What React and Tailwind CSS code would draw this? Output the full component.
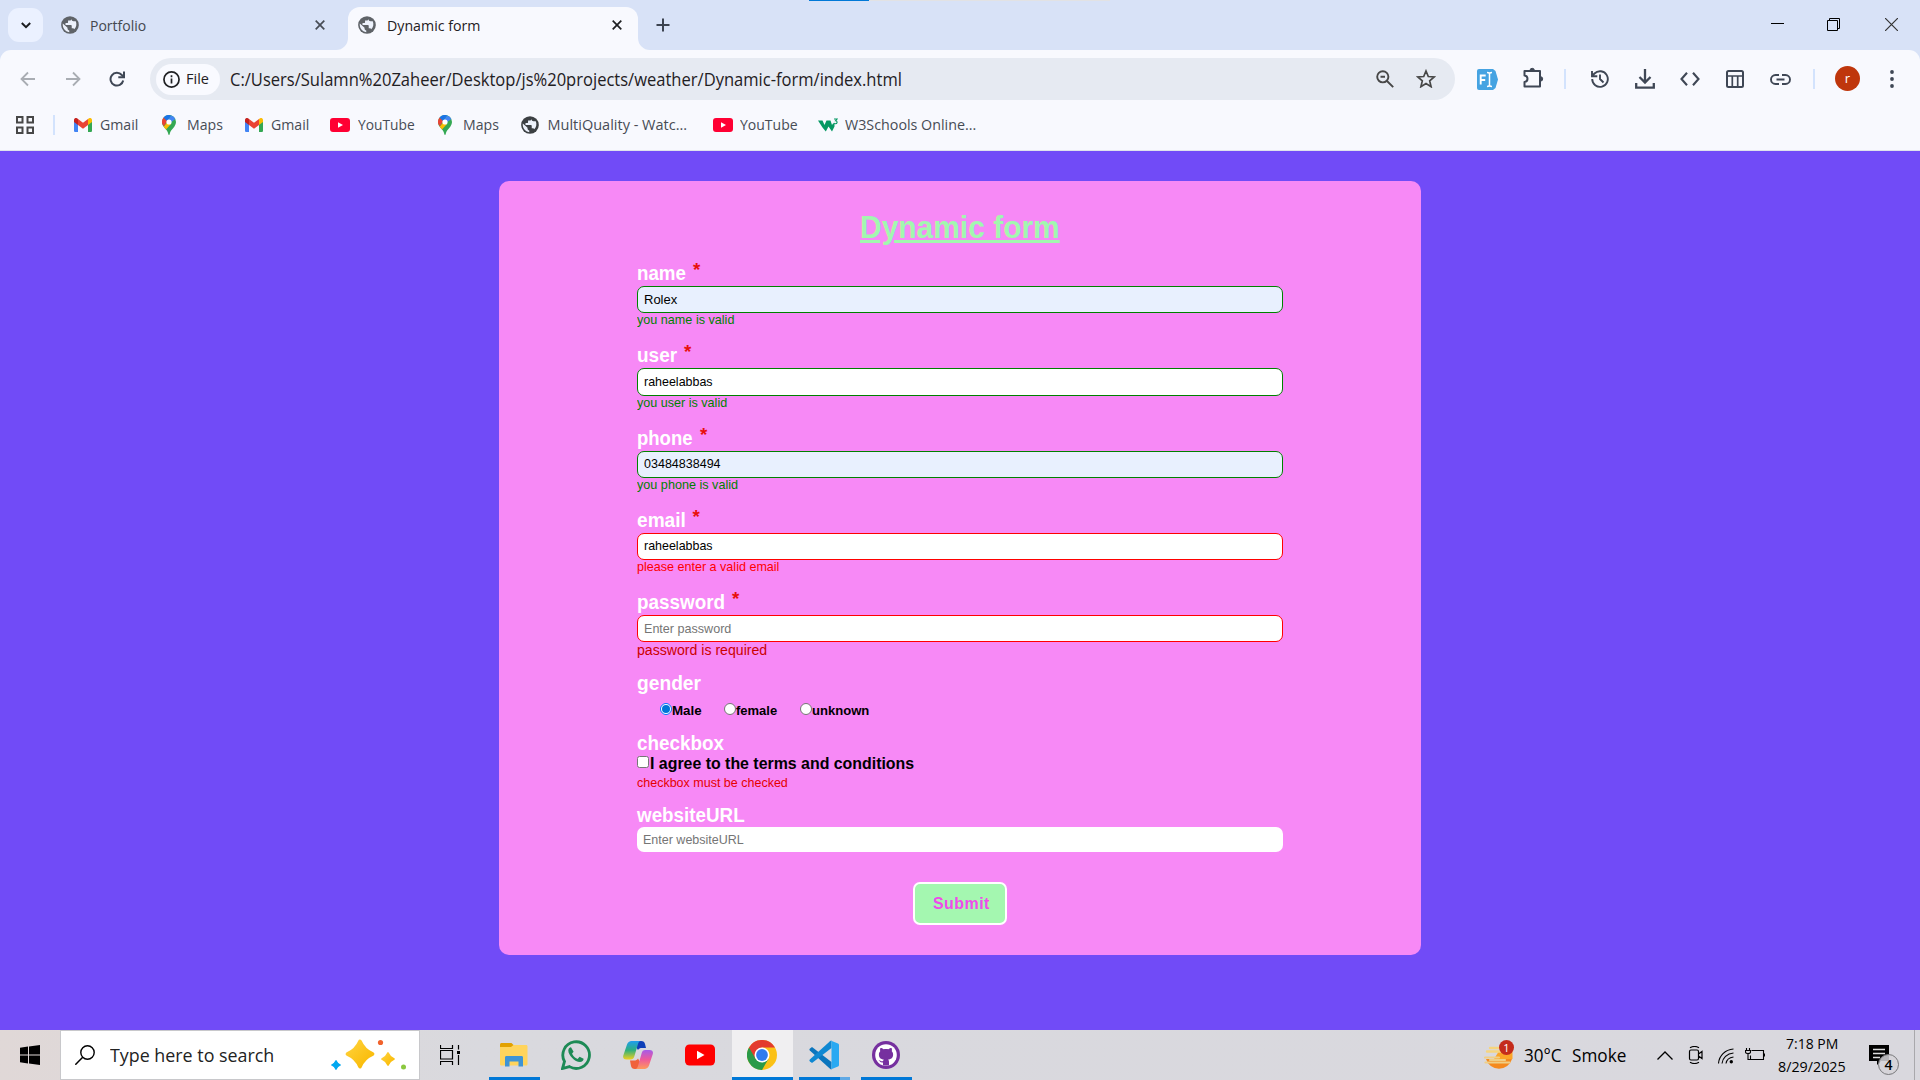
import React, { useLayoutEffect, useRef, useState } from "react";

/* One line of text, squeezed or stretched to the width of its box. */
function Fit({ children, className = "" }) {
  const box = useRef(null);
  const ink = useRef(null);
  const [k, setK] = useState(1);
  useLayoutEffect(() => {
    setK(box.current.clientWidth / ink.current.offsetWidth);
  }, []);
  return (
    <span ref={box} className={"block shrink-0 whitespace-nowrap " + className}>
      <span ref={ink} className="inline-block origin-left" style={{ transform: `scaleX(${k})` }}>
        {children}
      </span>
    </span>
  );
}

function Svg({ className = "", children, box = "0 0 24 24", ...rest }) {
  return (
    <svg viewBox={box} fill="none" className={"block shrink-0 " + className} {...rest}>
      {children}
    </svg>
  );
}

const line = { stroke: "currentColor", strokeWidth: 2 };

function Globe({ className }) {
  return (
    <Svg box="0 0 24 24" className={"size-[18px] " + className}>
      <circle cx="12" cy="12" r="11.8" fill="currentColor" />
      <path
        d="M14 1.800v1.900c0 1.400-1 2.400-2.300 2.400H9.400v2.100c0 .7-.5 1.200-1.200 1.200H6v2.500h7c.7 0 1.300.5 1.300 1.300v3h1.200c1 0 1.900.7 2.200 1.600 2.900-3 3.500-7.200 2-10.800h-2.900c-1.600 0-2.800-1.200-2.800-2.700zM2.400 10.100C1.600 15.800 5.600 21 11 21.700v-2.500c-1.300 0-2.300-1-2.300-2.400v-1.200z"
        fill="#edf2fc"
      />
    </Svg>
  );
}

function Gmail({ className }) {
  return (
    <Svg box="0 0 18 14" className={"h-[14px] w-[18px] " + className}>
      <path d="M0 2v10.700c0 .7.600 1.300 1.300 1.300H4V5z" fill="#4285f4" />
      <path d="M14 5v9h2.700c.7 0 1.300-.6 1.300-1.300V2z" fill="#34a853" />
      <path d="M14 1v6l4-3V2c0-1.800-2-2.700-3.400-1.500z" fill="#fbbc04" />
      <path d="M4 7V1l5 3.800L14 1v6l-5 3.800z" fill="#ea4335" />
      <path d="M0 2v2l4 3V1l-.6-.5C2-.7 0 .2 0 2z" fill="#c5221f" />
    </Svg>
  );
}

function MapPin({ className }) {
  return (
    <Svg box="0 0 14 20" className={"h-[20px] w-[14px] " + className}>
      <path d="M7 0a7 7 0 0 0-7 7c0 2 .7 3.400 1.700 4.700C4 14.600 5.800 16 6.300 19c.1.700.3 1 .7 1s.6-.3.7-1c.5-3 2.300-4.400 4.600-7.300A7.500 7.500 0 0 0 14 7a7 7 0 0 0-7-7z" fill="#34a853" />
      <path d="M1.700 11.700 5 7.500 9 9 4 14.500z" fill="#fbbc04" />
      <path d="M1.600 2.500 5.500 6 1.700 11.200A7 7 0 0 1 1.600 2.500z" fill="#ea4335" />
      <path d="M1.600 2.500A7 7 0 0 1 9.200.4L5 6z" fill="#1a73e8" />
      <path d="M9.200.4A7 7 0 0 1 13.300 4L8 8 5 6z" fill="#4285f4" />
      <circle cx="7" cy="7" r="2.600" fill="#fff" />
    </Svg>
  );
}

function YouTube({ className, color = "#ff0033" }) {
  return (
    <Svg box="0 0 20 14" className={className}>
      <rect width="20" height="14" rx="3" fill={color} />
      <path d="M8 4.200v5.600L13 7z" fill="#fff" />
    </Svg>
  );
}

function Close({ className }) {
  return (
    <Svg box="0 0 10 10" className={"size-[10px] " + className}>
      <path d="M.7.700l8.600 8.600M9.300.700.7 9.300" stroke="currentColor" strokeWidth="1.700" />
    </Svg>
  );
}

function TabStrip() {
  return (
    <div className="relative flex h-[50px] items-start bg-[#d8e2f7]">
      <div className="absolute left-[809px] top-0 flex h-px w-[301px] bg-[#e2e2e4]">
        <div className="h-px w-[60px] bg-[#0078d7]" />
      </div>
      <div className="ml-[8px] mt-[8px] flex h-[34px] w-[35px] items-center justify-center rounded-[11px] bg-[#ebf1ff]">
        <Svg box="0 0 10 7" className="h-[7px] w-[10px] text-[#1b1c1f]">
          <path d="M.8 1 5 5.200 9.200 1" {...line} />
        </Svg>
      </div>
      <div className="ml-[18px] flex h-[50px] w-[275px] items-center">
        <Globe className="text-[#5f6368]" />
        <Fit className="ml-[11px] mt-px w-[56px] text-[14.5px] text-[#44484f]">Portfolio</Fit>
        <Close className="ml-[169px] text-[#474c55]" />
      </div>
      <div className="flex h-[50px] items-end">
        <Svg box="0 0 12 12" className="size-[12px]">
          <path d="M12 0v12H0A12 12 0 0 0 12 0z" fill="#f8f9fe" />
        </Svg>
        <div className="flex h-[43px] w-[290px] items-center rounded-t-[12px] bg-[#f8f9fe] pb-[7px] pl-[10px]">
          <Globe className="text-[#5f6368]" />
          <Fit className="ml-[11px] mt-px w-[92.500px] text-[14.5px] text-[#1f2023]">Dynamic form</Fit>
          <Close className="ml-[132.500px] text-[#1f2023]" />
        </div>
        <Svg box="0 0 12 12" className="size-[12px]">
          <path d="M0 0v12h12A12 12 0 0 1 0 0z" fill="#f8f9fe" />
        </Svg>
      </div>
      <Svg box="0 0 14 14" className="ml-[6px] mt-[18px] size-[14px] text-[#3c4350]">
        <path d="M7 .5v13M.5 7h13" {...line} />
      </Svg>
      <div className="ml-auto mr-[22px] mt-[18px] flex text-black">
        <Svg box="0 0 13 13" className="size-[13px]">
          <path d="M0 5.500h13" stroke="currentColor" />
        </Svg>
        <Svg box="0 0 13 13" className="ml-[43px] size-[13px]">
          <path d="M.5 2.500h10v10H.5zM2.500 2.500v-2h10v10h-2" stroke="currentColor" />
        </Svg>
        <Svg box="0 0 13 13" className="ml-[45px] size-[13px] text-[#333]">
          <path d="M0 0l13 13M13 0 0 13" stroke="currentColor" strokeWidth="1.200" />
        </Svg>
      </div>
    </div>
  );
}

function Toolbar() {
  return (
    <div className="bg-[#d8e2f7]">
      <div className="flex h-[58px] items-center rounded-t-[11px] bg-[#f8f9fe] text-[#3f4755]">
        <Svg box="0 0 16 16" className="ml-[20px] size-[16px] text-[#a9adb3]">
          <path d="M15 8H2M8 1.500 1.500 8 8 14.500" stroke="currentColor" strokeWidth="1.800" />
        </Svg>
        <Svg box="0 0 16 16" className="ml-[29px] size-[16px] text-[#a9adb3]">
          <path d="M1 8h13M8 1.500 14.500 8 8 14.500" stroke="currentColor" strokeWidth="1.800" />
        </Svg>
        <Svg box="0 0 16 16" className="ml-[28px] mt-[-1px] size-[16px]">
          <path d="M14.200 9.500A6.400 6.400 0 1 1 12.800 4L14.500 5.500" {...line} />
          <path d="M15 .5v5.700H9.300" {...line} />
        </Svg>
        <div className="ml-[25px] flex h-[42px] w-[1305px] items-center rounded-full bg-[#e6eaf2]">
          <div className="ml-[6px] flex h-[31px] w-[64px] items-center rounded-full bg-[#f9faff] text-[#1f2023]">
            <Svg box="0 0 18 18" className="ml-[7px] size-[17px]">
              <circle cx="9" cy="9" r="8" stroke="currentColor" strokeWidth="1.800" />
              <path d="M9 8v5.200M9 4.500v2" stroke="currentColor" strokeWidth="1.800" />
            </Svg>
            <Fit className="ml-[6px] w-[23px] text-[14.500px] font-medium">File</Fit>
          </div>
          <Fit className="ml-[10px] w-[672px] text-[17.500px] text-[#1f2023]">
            C:/Users/Sulamn%20Zaheer/Desktop/js%20projects/weather/Dynamic-form/index.html
          </Fit>
          <Svg box="0 0 18 18" className="ml-[474px] size-[18px] text-[#474747]">
            <circle cx="6.800" cy="6.800" r="5.600" stroke="currentColor" strokeWidth="1.900" />
            <path d="m11 11 6.200 6.200M4.500 6.800H9" stroke="currentColor" strokeWidth="1.900" />
          </Svg>
          <Svg box="0 0 20 19" className="ml-[21.500px] mt-[-1px] h-[19px] w-[20px] text-[#474747]">
            <path d="m10 2 2.300 5.500 5.900.5-4.500 3.900 1.400 5.800-5.100-3.100-5.100 3.100 1.400-5.800L1.800 8l5.900-.5z" stroke="currentColor" strokeWidth="1.700" />
          </Svg>
        </div>
        <Svg box="0 0 21 21" className="ml-[22px] size-[21px]">
          <path d="M2 0h14l2.500 2L21 10.500l-2.500 8.500-2.500 2H2a2 2 0 0 1-2-2V2a2 2 0 0 1 2-2z" fill="#45a3e2" />
          <path d="M3.700 15.500V6.500h5M3.700 11h4.500" stroke="#fff" strokeWidth="1.900" />
          <path d="M10 3.500c1.500 0 2.500.4 2.500 1.500v11c0 1-1 1.500-2.500 1.500M15 3.500c-1.500 0-2.500.4-2.500 1.500v11c0 1 1 1.500 2.500 1.500" stroke="#fff" strokeWidth="1.500" />
        </Svg>
        <Svg box="0 0 21 21" className="ml-[25px] mt-[-3px] size-[21px]">
          <path d="M1.500 4h15.500v15.500H1.500V15c4-.6 4-6 0-6.600z" {...line} strokeLinejoin="round" />
          <path d="M7 3.500a2.200 2.200 0 0 1 4.400 0zM17.500 9.700a2.200 2.200 0 0 1 0 4.400z" fill="currentColor" stroke="currentColor" />
        </Svg>
        <div className="ml-[20px] h-[20px] w-[2px] bg-[#d3e3fd]" />
        <Svg box="0 0 18 18" className="ml-[25px] size-[18px]">
          <path d="M1.200 9A7.800 7.800 0 1 0 3.500 3.500L1 6M1 1v5.300h5.300M9 4.500V9l3.500 3.500" stroke="currentColor" strokeWidth="1.900" />
        </Svg>
        <Svg box="0 0 20 20" className="ml-[26px] size-[20px]">
          <path d="M10 0v13M4.500 8l5.500 5.500L15.500 8M1.200 14v4.700h17.600V14" stroke="currentColor" strokeWidth="2.300" />
        </Svg>
        <Svg box="0 0 20 14" className="ml-[25px] h-[14px] w-[20px]">
          <path d="M7 .8 1.500 7 7 13.200M13 .8 18.500 7 13 13.200" stroke="currentColor" strokeWidth="2.100" />
        </Svg>
        <Svg box="0 0 18 18" className="ml-[26px] size-[18px]">
          <rect x="1" y="1" width="16" height="16" rx="1.500" {...line} />
          <path d="M1 6h16M6.300 6v11M11.700 6v11" stroke="currentColor" strokeWidth="1.700" />
        </Svg>
        <Svg box="0 0 21 11" className="ml-[26px] h-[11px] w-[21px]">
          <path d="M9 1H5.500a4.500 4.500 0 0 0 0 9H9M12 1h3.500a4.500 4.500 0 0 1 0 9H12M6.500 5.500h8" stroke="currentColor" strokeWidth="1.900" />
        </Svg>
        <div className="ml-[22px] h-[20px] w-[2px] bg-[#d3e3fd]" />
        <div className="ml-[20px] mt-[-1px] flex size-[25px] items-center justify-center rounded-full bg-[#bf360c] text-[13px] leading-none text-white">r</div>
        <Svg box="0 0 4 18" className="ml-[30px] mt-[-1px] h-[18px] w-[4px]">
          <circle cx="2" cy="2" r="1.900" fill="currentColor" />
          <circle cx="2" cy="9" r="1.900" fill="currentColor" />
          <circle cx="2" cy="16" r="1.900" fill="currentColor" />
        </Svg>
      </div>
    </div>
  );
}

function Bookmarks() {
  return (
    <div className="flex h-[43px] items-center border-b border-[#dfe2ec] bg-[#f8f9fe] pb-[8px] text-[14.500px] text-[#474c55]">
      <Svg box="0 0 18 18" className="ml-[15.500px] size-[18px] text-[#474747]">
        <path d="M1 1h5.500v5.500H1zM11.500 1H17v5.500h-5.500zM1 11.500h5.500V17H1zM11.500 11.500H17V17h-5.500z" stroke="currentColor" strokeWidth="2" />
      </Svg>
      <div className="ml-[19.500px] h-[20px] w-[2px] bg-[#d3e3fd]" />
      <Gmail className="ml-[19px]" />
      <Fit className="ml-[8px] w-[38px]">Gmail</Fit>
      <MapPin className="ml-[24px]" />
      <Fit className="ml-[11px] w-[36px]">Maps</Fit>
      <Gmail className="ml-[22px]" />
      <Fit className="ml-[8px] w-[38px]">Gmail</Fit>
      <YouTube className="ml-[21px] h-[14px] w-[20px]" />
      <Fit className="ml-[8px] w-[57px]">YouTube</Fit>
      <MapPin className="ml-[23px]" />
      <Fit className="ml-[11px] w-[36px]">Maps</Fit>
      <Globe className="ml-[22px] text-[#3c4043]" />
      <Fit className="ml-[8.500px] w-[140px]">MultiQuality - Watc...</Fit>
      <YouTube className="ml-[25.500px] h-[14px] w-[20px]" />
      <Fit className="ml-[7px] w-[57.500px]">YouTube</Fit>
      <Svg box="0 0 20 14" className="ml-[20.500px] h-[14px] w-[20px]">
        <path d="M0 2.500h4.500l2 4.500L8.500 2.500h4L14 7l1-1.500h1.500v3L14 13.500l-3.500-5-2.700 5-3.300-4z" fill="#059862" />
        <path d="M16 1h3l-1.500 1.800c2.300.2 2 3-.2 3-.8 0-1.300-.4-1.500-1" stroke="#059862" strokeWidth="1.100" />
      </Svg>
      <Fit className="ml-[7px] w-[131px]">W3Schools Online...</Fit>
    </div>
  );
}

function Label({ children, required, width }) {
  return (
    <div className="flex h-[22px] text-[19.500px] font-bold leading-[21px] text-white">
      <Fit className={width}>{children}</Fit>
      {required && <span className="ml-[7px] mt-[-4px] text-[18.750px] font-bold text-[#e8100c]">*</span>}
    </div>
  );
}

const fields = [
  { label: "name", lw: "w-[49px]", value: "Rolex", vw: "w-[32.500px]", input: "h-[27px] border-[#008000] bg-[#e8f0fe]", note: "you name is valid", nw: "w-[97px]", tone: "text-[#008000]" },
  { label: "user", lw: "w-[40px]", value: "raheelabbas", vw: "w-[69px]", input: "h-[28px] border-[#008000] bg-white", note: "you user is valid", nw: "w-[90px]", tone: "text-[#008000]" },
  { label: "phone", lw: "w-[56px]", value: "03484838494", vw: "w-[77px]", input: "h-[27px] border-[#008000] bg-[#e8f0fe]", note: "you phone is valid", nw: "w-[100.500px]", tone: "text-[#008000]" },
  { label: "email", lw: "w-[48.500px]", value: "raheelabbas", vw: "w-[69px]", input: "h-[27px] border-[#ff0000] bg-white", note: "please enter a valid email", nw: "w-[142px]", tone: "text-[#ff0000]" },
];

function Field({ f }) {
  return (
    <div className="h-[82.300px]">
      <Label required width={f.lw}>{f.label}</Label>
      <div className={"mt-[1px] flex items-center rounded-[7px] border pl-[6px] text-[13px] leading-[14px] text-black " + f.input}>
        <Fit className={f.vw}>{f.value}</Fit>
      </div>
      <Fit className={"text-[13px] leading-[14px] " + f.nw + " " + f.tone}>{f.note}</Fit>
    </div>
  );
}

function Radio({ on, className = "", label, width }) {
  return (
    <div className={"flex items-start " + className}>
      <div className={"flex size-[12px] items-center justify-center rounded-full border bg-white " + (on ? "border-[#0075ff]" : "border-[#767676]")}>
        {on && <div className="size-[8px] rounded-full bg-[#0075d7]" />}
      </div>
      <Fit className={"mt-px text-[13.300px] font-bold leading-[14px] text-black " + width}>{label}</Fit>
    </div>
  );
}

function Form() {
  return (
    <div className="flex h-[879px] justify-center bg-[#714bf7] pt-[30px] font-['Liberation_Sans',Arial,sans-serif]">
      <div className="h-[774px] w-[922px] rounded-[10px] bg-[#f789f6] px-[138px] pt-[29px]">
        <h1 className="flex h-[53px] justify-center text-[31px] font-bold leading-[35px] text-[#a2f7af]">
          <Fit className="w-[200px]">
            <span className="underline">Dynamic form</span>
          </Fit>
        </h1>
        {fields.map((f) => (
          <Field key={f.label} f={f} />
        ))}
        <Label required width="w-[88px]">password</Label>
        <div className="mt-px flex h-[27px] items-center rounded-[7px] border border-[#ff0000] bg-white pl-[6px] text-[13px] leading-[14px] text-[#757575]">
          <Fit className="w-[87px]">Enter password</Fit>
        </div>
        <Fit className="w-[129.500px] text-[14px] leading-[17px] text-[#cc0000]">password is required</Fit>
        <div className="mt-[14px]">
          <Label width="w-[63.500px]">gender</Label>
        </div>
        <div className="mt-[8px] flex h-[30px] pl-[22.500px]">
          <Radio on label="Male" width="ml-[0.500px] w-[29.500px]" />
          <Radio className="ml-[22.500px]" label="female" width="ml-0 w-[41px]" />
          <Radio className="ml-[22.500px]" label="unknown" width="ml-[0.500px] w-[57px]" />
        </div>
        <Label width="w-[86.500px]">checkbox</Label>
        <div className="flex h-[21px] items-start">
          <div className="mt-[1px] size-[12px] rounded-[2.500px] border border-[#767676] bg-white" />
          <Fit className="ml-[0.500px] mt-[-1px] w-[264px] text-[16.500px] font-bold leading-[18px] text-black">I agree to the terms and conditions</Fit>
        </div>
        <Fit className="w-[151px] text-[13px] leading-[14px] text-[#e60000]">checkbox must be checked</Fit>
        <div className="mt-[15px]">
          <Label width="w-[107.500px]">websiteURL</Label>
        </div>
        <div className="flex h-[25px] items-center rounded-[7px] bg-white pl-[6px] text-[13px] leading-[14px] text-[#757575]">
          <Fit className="w-[101px]">Enter websiteURL</Fit>
        </div>
        <div className="mt-[30px] flex justify-center">
          <div className="flex h-[43px] w-[94px] items-center justify-center rounded-[7px] border-2 border-white bg-[#a4f7b0] pb-[2px] pl-[2px] text-[16.500px] font-bold leading-[18px] text-[#ee4bea]">
            <Fit className="w-[57px] tracking-[0.500px]">Submit</Fit>
          </div>
        </div>
      </div>
    </div>
  );
}

function Running({ className, children, underline = "bg-[#0078d7]" }) {
  return (
    <div className={"flex h-[50px] shrink-0 flex-col items-center " + className}>
      <div className="flex h-[47px] w-full items-center justify-center pt-[3px]">{children}</div>
      <div className={"h-[3px] w-full " + underline} />
    </div>
  );
}

function Star({ x, y, r, fill }) {
  const q = r * 0.3;
  return (
    <path
      d={`M${x} ${y - r}Q${x + q} ${y - q} ${x + r} ${y}Q${x + q} ${y + q} ${x} ${y + r}Q${x - q} ${y + q} ${x - r} ${y}Q${x - q} ${y - q} ${x} ${y - r}z`}
      fill={fill}
      stroke={fill}
      strokeWidth={r * 0.3}
      strokeLinejoin="round"
    />
  );
}

function Taskbar() {
  return (
    <div className="flex h-[50px] items-center bg-gradient-to-r from-[#e0d8d7] via-[#d9d9de] via-25% to-[#d9d8de] text-black">
      <Svg box="0 0 20 20" className="ml-[20px] size-[20px]">
        <path d="M0 2.700 8 1.600v7.900H0zM9 1.500 20 0v9.500H9zM0 10.500h8v7.900l-8-1.100zM9 10.500h11V20L9 18.500z" fill="#000" />
      </Svg>
      <div className="ml-[20px] flex h-[50px] w-[360px] items-center border border-[#c8c8cb] bg-white">
        <Svg box="0 0 20 20" className="ml-[14px] size-[20px]">
          <circle cx="12.500" cy="7.500" r="6.700" stroke="#000" strokeWidth="1.400" />
          <path d="m7.700 12.300-7.400 7.400" stroke="#000" strokeWidth="1.500" />
        </Svg>
        <Fit className="ml-[15px] w-[164px] text-[18.500px] text-[#222]">Type here to search</Fit>
        <Svg box="0 0 76 32" className="ml-[56px] h-[32px] w-[76px]">
          <defs>
            <linearGradient id="gold" x1="0" y1="0" x2="1" y2="1">
              <stop offset="0" stopColor="#ffd23c" />
              <stop offset="1" stopColor="#f9b800" />
            </linearGradient>
          </defs>
          <Star x={30} y={15} r={12.500} fill="url(#gold)" />
          <Star x={58} y={20} r={6} fill="url(#gold)" />
          <Star x={6} y={26} r={4.300} fill="#00a8f0" />
          <circle cx="50.500" cy="3.500" r="2.600" fill="#f1622c" />
          <circle cx="73.500" cy="28" r="2.500" fill="#8bc83f" />
        </Svg>
      </div>
      <Svg box="0 0 20 20" className="ml-[20px] size-[20px]">
        <path d="M.5 0v3.500h12V0M.5 20v-3.500h12V20M.5 5.500h12v8.500H.5zM18.500 0v4.500M18.500 10v10" stroke="#000" strokeWidth="1.200" />
        <path d="M17 6h3v3h-3z" fill="#000" />
      </Svg>
      <Running className="ml-[29px] w-[51px]">
        <Svg box="0 0 28 24" className="mr-px h-[24px] w-[28px]">
          <path d="M0 1.500C0 .7.700 0 1.500 0h10L14 2.500 11 8H0z" fill="#e2a100" />
          <path d="M0 4h11l2.500-2H26c1 0 1.500.6 1.500 1.500V21c0 1-.7 1.500-1.500 1.500H1.500C.6 22.500 0 22 0 21z" fill="#ffd45c" />
          <path d="M5 23.500v-9c0-1 .6-1.500 1.500-1.500h15c.9 0 1.500.5 1.500 1.500v9h-4.500v-5h-9v5z" fill="#3f94d5" />
        </Svg>
      </Running>
      <Svg box="0 0 30 30" className="ml-[21px] size-[30px]">
        <path d="M1.500 28.500 3.500 21.500A13.300 13.300 0 1 1 8.500 26.600z" stroke="#1d8a55" strokeWidth="2.800" />
        <path d="M10 7.300c-.6-.2-2.700.7-2.700 3.200 0 4.800 6.700 11.600 11.700 11.600 2 0 3.800-1.600 3.600-3.400l-4-2-2 2.200c-2.200-.6-5-3.400-5.500-5.400l1.500-1.700z" fill="#1d8a55" />
      </Svg>
      <Svg box="0 0 30 28" className="ml-[32px] h-[28px] w-[30px]">
        <defs>
          <linearGradient id="cpA" x1="0" y1="0" x2="0" y2="1">
            <stop offset="0" stopColor="#1e9df0" />
            <stop offset=".5" stopColor="#2eb07c" />
            <stop offset="1" stopColor="#f0d020" />
          </linearGradient>
          <linearGradient id="cpB" x1="0" y1="0" x2="0" y2="1">
            <stop offset="0" stopColor="#a55bea" />
            <stop offset=".5" stopColor="#ee5a9a" />
            <stop offset="1" stopColor="#ff9a5a" />
          </linearGradient>
        </defs>
        <path d="M9 0h9c2.500 0 3.500 1 4 3l1 4h-4c-2 0-3 .5-4 2z" fill="#0d3fb8" />
        <path d="M21 28h-9c-2.500 0-3.500-1-4-3l-1-5.500h4c2 0 3-.5 4-2z" fill="#f0623c" />
        <path d="M8.500 0H18c-2 0-2.500 1.500-3 3L11.300 15.500c-.6 1.900-1.600 3-3.600 3H3.500C.5 18.500-.3 16.500.3 14.500L4 3.500C4.800 1.200 6.500 0 8.500 0z" fill="url(#cpA)" />
        <path d="M21.500 28H12c2 0 2.500-1.500 3-3l3.700-13c.6-1.900 1.600-3 3.600-3h4.200c3 0 3.900 2 3.300 4L26 24.500c-.8 2.300-2.500 3.500-4.500 3.500z" fill="url(#cpB)" />
      </Svg>
      <YouTube className="ml-[32px] h-[22px] w-[30px]" color="#ff0000" />
      <Running className="ml-[17px] w-[61px] bg-[#f0eff1]">
        <svg viewBox="0 0 30 30" className="mr-px size-[30px]">
          <circle cx="15" cy="15" r="15" fill="#fbc116" />
          <path d="M15 15 2 7.500A15 15 0 0 0 15 30l6.500-11.300z" fill="#2a9a48" />
          <path d="M2 7.500A15 15 0 0 1 28 7.500H15L8.500 18.700z" fill="#e33b2e" />
          <circle cx="15" cy="15" r="7.500" fill="#fff" />
          <circle cx="15" cy="15" r="5.900" fill="#2f7bee" />
        </svg>
      </Running>
      <Running className="ml-[6px] w-[51px]" underline="bg-gradient-to-r from-[#0078d7] from-80% to-[#60a9e5] to-80%">
        <svg viewBox="0 0 30 30" className="mr-[2px] size-[30px]">
          <path d="M1 8.500 3 7 22.500 22v7.500c-.6 0-1-.3-1.500-.7L.8 10.600c-.6-.6-.5-1.500.2-2.100z" fill="#0b75bd" />
          <path d="M1 21.500 3 23 22.500 8V.500c-.6 0-1 .3-1.500.7L.8 19.400c-.6.600-.5 1.500.2 2.100z" fill="#0f88d2" />
          <path d="M21.500.500 29 3.500c.6.300 1 .8 1 1.500v20c0 .7-.4 1.200-1 1.500l-7.500 3c.7-.2 1-.8 1-1.500V2c0-.7-.3-1.200-1-1.500z" fill="#29a9f2" />
        </svg>
      </Running>
      <Running className="ml-[11px] w-[51px]">
        <svg viewBox="0 0 28 28" className="mr-[2px] size-[28px]">
          <circle cx="14" cy="14" r="14" fill="#76309f" />
          <circle cx="14" cy="14" r="10.800" fill="#fff" />
          <path d="M11 24.500v-3c-3 .4-3.200-1.500-4.500-2.200 2-.4 2.300 1.600 4.600.8.100-.8.500-1.200.8-1.500-3-.4-5-1.700-5-5.100 0-1.300.4-2.300 1.300-3.200-.3-1-.2-2.200.2-3.300 1.200 0 2.200.5 3.300 1.300 1.600-.4 3-.4 4.600 0 1.100-.8 2.100-1.300 3.300-1.300.4 1.100.5 2.300.2 3.300.9.900 1.300 1.900 1.300 3.200 0 3.400-2 4.700-5 5.100.6.500.9 1.200.9 2.200v3.700z" fill="#76309f" />
        </svg>
      </Running>
      <div className="ml-auto flex h-[50px] items-center">
        <div className="relative h-[30px] w-[30px]">
          <Svg box="0 0 30 30" className="size-[30px]">
            <path d="M2 19h26a13.500 13.500 0 0 1-26 0z" fill="#f58a1f" />
            <path d="M15 11h13.500v8H10z" fill="#fba428" />
            <path d="M6 8h9M3 11.500h15" stroke="#f6d57e" strokeWidth="2.400" strokeLinecap="round" />
            <path d="M1 17.500h14M1.500 22.500h24M6 20h15" stroke="#f0cf86" strokeWidth="2.200" strokeLinecap="round" />
          </Svg>
          <div className="absolute left-[15px] top-0 flex size-[15px] items-center justify-center rounded-full bg-[#c42b1c] text-[11px] leading-none text-white">1</div>
        </div>
        <Fit className="ml-[10px] w-[38px] text-[17.500px]">30°C</Fit>
        <Fit className="ml-[10px] w-[54px] text-[17.500px]">Smoke</Fit>
        <Svg box="0 0 16 9" className="ml-[31px] h-[9px] w-[16px]">
          <path d="M.5 8.500 8 1l7.500 7.500" stroke="#000" strokeWidth="1.300" />
        </Svg>
        <Svg box="0 0 16 18" className="ml-[15px] h-[18px] w-[16px]">
          <path d="M3 4h6c1 0 1.500.5 1.500 1.500v7c0 1-.5 1.500-1.500 1.500H3c-1 0-1.500-.5-1.500-1.500v-7C1.500 4.500 2 4 3 4zM10.500 8l3.500-2.500v7L10.500 10M2 1.800C4.500.3 8.500.3 11 1.800M2 16.200c2.500 1.500 6.500 1.500 9 0" stroke="#000" strokeWidth="1.200" />
        </Svg>
        <Svg box="0 0 16 16" className="ml-[14px] mt-[2px] size-[16px]">
          <path d="M.5 15.500C1 8 7 1.500 15.500 1M4 15.500C4.500 10 9 5.500 15.500 5M8 15.500C8.500 12 11 9.500 15.500 9" stroke="#000" strokeWidth="1.100" />
          <circle cx="13.300" cy="13.800" r="1.700" fill="#000" />
        </Svg>
        <Svg box="0 0 20 14" className="ml-[11px] h-[14px] w-[20px]">
          <path d="M6.500 2.500h12v9h-13V7.500M19.500 5.500v3M1.500 0v2M4.500 0v2M.5 2.500h5v1.500c0 2-5 2-5 0zM3 6v5.500h2.500" stroke="#000" strokeWidth="1.100" />
        </Svg>
        <div className="ml-[13px] flex w-[68px] flex-col items-center text-[14.500px] leading-[23px]">
          <Fit className="w-[52px]">7:18 PM</Fit>
          <Fit className="w-[68px]">8/29/2025</Fit>
        </div>
        <div className="relative ml-[23px] h-[20px] w-[20px]">
          <Svg box="0 0 20 20" className="size-[20px]">
            <path d="M0 0h20v16h-8l-4 4v-4H0z" fill="#000" />
            <path d="M4 4.500h12M4 8.500h12M4 12.500h7" stroke="#ddd" strokeWidth="1.300" />
          </Svg>
          <div className="absolute left-[9px] top-[9px] flex size-[21px] items-center justify-center rounded-full border border-[#77777a] bg-[#d5d4d8]/85 text-[14px] font-semibold leading-none">4</div>
        </div>
        <div className="ml-[25px] mr-[5px] h-[50px] w-px bg-[#a9a8ac]" />
      </div>
    </div>
  );
}

export default function App() {
  return (
    <div className="h-[1080px] w-[1920px] overflow-hidden bg-[#714bf7] font-['Open_Sans','Noto_Sans',sans-serif]">
      <TabStrip />
      <Toolbar />
      <Bookmarks />
      <Form />
      <Taskbar />
    </div>
  );
}
